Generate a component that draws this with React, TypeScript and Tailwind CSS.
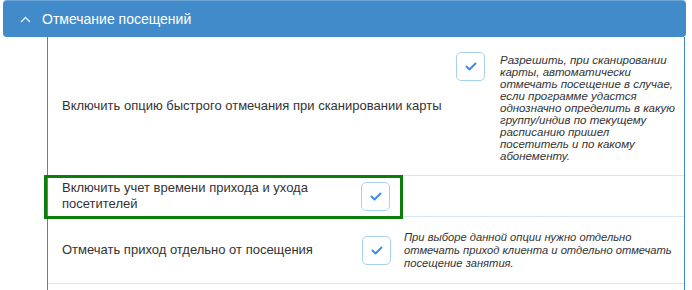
import React from "react";

function Check() {
  return (
    <div className="w-[29px] h-[29px] shrink-0 rounded-[5px] border border-[#a9d1f0] bg-white flex items-center justify-center">
      <svg width="12" height="9" viewBox="0 0 12 9" fill="none">
        <polyline points="1.5,4.5 4.5,7.5 10.5,1.5" stroke="#3b8ee4" strokeWidth="2" strokeLinecap="round" strokeLinejoin="round" />
      </svg>
    </div>
  );
}

const scanHint = [
  "Разрешить, при сканировании",
  "карты, автоматически",
  "отмечать посещение в случае,",
  "если программе удастся",
  "однозначно определить в какую",
  "группу/индив по текущему",
  "расписанию пришел",
  "посетитель и по какому",
  "абонементу.",
];

const arrivalHint = [
  "При выборе данной опции нужно отдельно",
  "отмечать приход клиента и отдельно отмечать",
  "посещение занятия.",
];

export default function App() {
  return (
    <div className="relative w-[692px] h-[290px] overflow-hidden bg-white font-['Liberation_Sans',Arial,sans-serif]">
      {/* Panel header */}
      <div className="ml-[3px] w-[683px] h-[37px] rounded-[4px] bg-[#428bca] border-t border-[#6fa6d8] flex items-center">
        <svg className="ml-[17px]" width="11" height="7" viewBox="0 0 11 7" fill="none">
          <polyline points="1,6 5.5,1.5 10,6" stroke="#e8f1fa" strokeWidth="1.3" />
        </svg>
        <span className="ml-[11px] text-[14px] text-white leading-none">Отмечание посещений</span>
      </div>

      {/* Panel body */}
      <div className="ml-[47px] w-[638px] border-l border-r border-[#3f89c9] text-[13px] text-[#333]">
        {/* Row 1 */}
        <div className="h-[139px] flex border-b border-[#d4e7f6]">
          <div className="w-[408px] pl-[14px] self-center whitespace-nowrap">
            Включить опцию быстрого отмечания при сканировании карты
          </div>
          <div className="mt-[15px]">
            <Check />
          </div>
          <div className="ml-[15px] mt-[17px] italic text-[11.5px] leading-[12px] whitespace-nowrap">
            {scanHint.map((line) => (
              <div key={line}>{line}</div>
            ))}
          </div>
        </div>

        {/* Row 2 */}
        <div className="h-[41px] flex items-center border-b border-[#d4e7f6]">
          <div className="w-[313px] pl-[14px] leading-[16px]">
            Включить учет времени прихода и ухода посетителей
          </div>
          <Check />
        </div>

        {/* Row 3 */}
        <div className="h-[67px] flex items-center border-b border-[#d4e7f6]">
          <div className="w-[314px] pl-[14px]">Отмечать приход отдельно от посещения</div>
          <Check />
          <div className="ml-[13px] italic text-[11.2px] leading-[13px] whitespace-nowrap">
            {arrivalHint.map((line) => (
              <div key={line}>{line}</div>
            ))}
          </div>
        </div>
        <div className="h-[10px]" />
      </div>

      {/* Highlight annotation */}
      <div className="absolute left-[44px] top-[175px] w-[359px] h-[44px] border-[3px] border-[#0b7d0b]" />
    </div>
  );
}
